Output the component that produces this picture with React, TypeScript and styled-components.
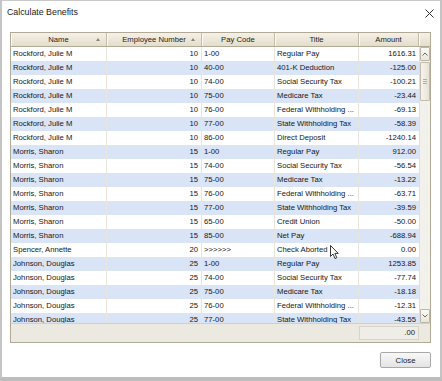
import React from "react";
import styled, { createGlobalStyle } from "styled-components";

const Global = createGlobalStyle`
  html, body { margin: 0; padding: 0; background: #fff; }
  * { box-sizing: border-box; }
`;

const Window = styled.div`
  position: relative;
  width: 442px;
  height: 381px;
  background: #fff;
  border-left: 2px solid #c4c4c4;
  border-right: 2px solid #c4c4c4;
  border-top: 1px solid #c9c9c9;
  border-bottom: 4px solid #bdbdbd;
  display: flex;
  flex-direction: column;
  font-family: "Liberation Sans", Arial, sans-serif;
`;

const TitleBar = styled.div`
  height: 31px;
  display: flex;
  align-items: flex-start;
  justify-content: space-between;
  padding: 6px 6px 0 5px;
`;

const TitleText = styled.div`
  font-size: 8.8px;
  color: #1a1a1a;
  line-height: 11px;
`;

const CloseX = styled.svg`
  width: 9px;
  height: 9px;
  margin-top: 2px;
`;

const Grid = styled.div`
  margin-left: 8px;
  width: 421px;
  border: 1px solid #b0a995;
  display: flex;
  flex-direction: column;
  background: #fff;
`;

const cols = "96px 95px 73px 84px 60px 11px";

const HeaderRow = styled.div`
  display: grid;
  grid-template-columns: ${cols};
  height: 14px;
  background: linear-gradient(#f5f1e6, #e4ddcb);
  border-bottom: 1px solid #b0a995;
`;

const HeaderCell = styled.div<{ $last?: boolean }>`
  position: relative;
  font-size: 7.7px;
  color: #222;
  text-align: center;
  line-height: 13px;
  border-right: ${(p) => (p.$last ? "none" : "1px solid #c4bba6")};
  box-shadow: inset 1px 0 0 #fbfaf6;
`;

const SortArrow = styled.span`
  position: absolute;
  right: 6px;
  top: 5px;
  width: 0;
  height: 0;
  border-left: 2.5px solid transparent;
  border-right: 2.5px solid transparent;
  border-bottom: 3px solid #8a8578;
`;

const Body = styled.div`
  display: flex;
  height: 276px;
`;

const Rows = styled.div`
  width: 408px;
  height: 276px;
  overflow: hidden;
`;

const Row = styled.div<{ $alt: boolean }>`
  display: grid;
  grid-template-columns: 96px 95px 73px 84px 60px;
  height: 14px;
  background: ${(p) => (p.$alt ? "#d9e4f6" : "#ffffff")};
`;

const Cell = styled.div<{ $right?: boolean; $last?: boolean }>`
  font-size: 7.7px;
  color: #161616;
  line-height: 14px;
  white-space: nowrap;
  overflow: hidden;
  padding: ${(p) => (p.$right ? "0 3px 0 2px" : "0 2px 0 2px")};
  text-align: ${(p) => (p.$right ? "right" : "left")};
  border-right: ${(p) => (p.$last ? "none" : "1px solid #e9e5dc")};
`;

const ScrollBar = styled.div`
  width: 11px;
  height: 276px;
  background: #f3f1ec;
  border-left: 1px solid #e2ded4;
  display: flex;
  flex-direction: column;
`;

const ScrollButton = styled.div`
  height: 14px;
  border: 1px solid #bdb7a8;
  border-radius: 1px;
  background: linear-gradient(#faf9f5, #e9e5da);
  display: flex;
  align-items: center;
  justify-content: center;
`;

const Thumb = styled.div`
  height: 39px;
  margin-top: 1px;
  border: 1px solid #c2bcae;
  border-radius: 1px;
  background: linear-gradient(90deg, #f6f4ee, #e6e1d4);
  display: flex;
  flex-direction: column;
  align-items: center;
  justify-content: center;
  gap: 1px;
`;

const Grip = styled.span`
  width: 4px;
  height: 1px;
  background: #b4ae9f;
`;

const Track = styled.div`
  flex: 1;
`;

const Footer = styled.div`
  height: 19px;
  background: #ece9e0;
  border-top: 1px solid #d4cfc2;
  display: grid;
  grid-template-columns: 348px 60px 11px;
  align-items: center;
`;

const FooterAmount = styled.div`
  height: 14px;
  border: 1px solid #d8d4c9;
  background: #efede7;
  font-size: 7.7px;
  color: #161616;
  line-height: 12px;
  text-align: right;
  padding-right: 3px;
`;

const ButtonBar = styled.div`
  display: flex;
  justify-content: flex-end;
  padding: 9px 9px 0 0;
`;

const CloseButton = styled.button`
  width: 51px;
  height: 16px;
  border: 1px solid #a9a9a9;
  border-radius: 2px;
  background: linear-gradient(#f8f8f8, #e4e4e4);
  font-family: "Liberation Sans", Arial, sans-serif;
  font-size: 7.8px;
  color: #1a1a1a;
  padding: 0;
`;

const Cursor = styled.svg`
  position: absolute;
  left: 328px;
  top: 244px;
  width: 10px;
  height: 15px;
`;

type R = [string, string, string, string, string];

const data: R[] = [
  ["Rockford, Julie M", "10", "1-00", "Regular Pay", "1616.31"],
  ["Rockford, Julie M", "10", "40-00", "401-K Deduction", "-125.00"],
  ["Rockford, Julie M", "10", "74-00", "Social Security Tax", "-100.21"],
  ["Rockford, Julie M", "10", "75-00", "Medicare Tax", "-23.44"],
  ["Rockford, Julie M", "10", "76-00", "Federal Withholding ...", "-69.13"],
  ["Rockford, Julie M", "10", "77-00", "State Withholding Tax", "-58.39"],
  ["Rockford, Julie M", "10", "86-00", "Direct Deposit", "-1240.14"],
  ["Morris, Sharon", "15", "1-00", "Regular Pay", "912.00"],
  ["Morris, Sharon", "15", "74-00", "Social Security Tax", "-56.54"],
  ["Morris, Sharon", "15", "75-00", "Medicare Tax", "-13.22"],
  ["Morris, Sharon", "15", "76-00", "Federal Withholding ...", "-63.71"],
  ["Morris, Sharon", "15", "77-00", "State Withholding Tax", "-39.59"],
  ["Morris, Sharon", "15", "65-00", "Credit Union", "-50.00"],
  ["Morris, Sharon", "15", "85-00", "Net Pay", "-688.94"],
  ["Spencer, Annette", "20", ">>>>>>", "Check Aborted", "0.00"],
  ["Johnson, Douglas", "25", "1-00", "Regular Pay", "1253.85"],
  ["Johnson, Douglas", "25", "74-00", "Social Security Tax", "-77.74"],
  ["Johnson, Douglas", "25", "75-00", "Medicare Tax", "-18.18"],
  ["Johnson, Douglas", "25", "76-00", "Federal Withholding ...", "-12.31"],
  ["Johnson, Douglas", "25", "77-00", "State Withholding Tax", "-43.55"],
];

const Chevron = ({ up }: { up: boolean }) => (
  <svg width="6" height="4" viewBox="0 0 6 4">
    <path
      d={up ? "M0.5 3.5 L3 1 L5.5 3.5" : "M0.5 0.5 L3 3 L5.5 0.5"}
      fill="none"
      stroke="#6d6a62"
      strokeWidth="1"
    />
  </svg>
);

export default function App() {
  return (
    <>
      <Global />
      <Window>
        <TitleBar>
          <TitleText>Calculate Benefits</TitleText>
          <CloseX viewBox="0 0 9 9">
            <path d="M0.5 0.5 L8.5 8.5 M8.5 0.5 L0.5 8.5" stroke="#333" strokeWidth="1" />
          </CloseX>
        </TitleBar>
        <Grid>
          <HeaderRow>
            <HeaderCell>
              Name<SortArrow />
            </HeaderCell>
            <HeaderCell>
              Employee Number<SortArrow />
            </HeaderCell>
            <HeaderCell>Pay Code</HeaderCell>
            <HeaderCell>Title</HeaderCell>
            <HeaderCell>Amount</HeaderCell>
            <HeaderCell $last />
          </HeaderRow>
          <Body>
            <Rows>
              {data.map((r, i) => (
                <Row key={i} $alt={i % 2 === 1}>
                  <Cell>{r[0]}</Cell>
                  <Cell $right>{r[1]}</Cell>
                  <Cell>{r[2]}</Cell>
                  <Cell>{r[3]}</Cell>
                  <Cell $right $last>
                    {r[4]}
                  </Cell>
                </Row>
              ))}
            </Rows>
            <ScrollBar>
              <ScrollButton>
                <Chevron up />
              </ScrollButton>
              <Thumb>
                <Grip />
                <Grip />
                <Grip />
              </Thumb>
              <Track />
              <ScrollButton>
                <Chevron up={false} />
              </ScrollButton>
            </ScrollBar>
          </Body>
          <Footer>
            <span />
            <FooterAmount>.00</FooterAmount>
            <span />
          </Footer>
        </Grid>
        <ButtonBar>
          <CloseButton>Close</CloseButton>
        </ButtonBar>
        <Cursor viewBox="0 0 10 15">
          <path
            d="M0.5 0.5 L0.5 11.5 L3 9 L5 13.5 L6.8 12.7 L4.9 8.4 L8.3 8.4 Z"
            fill="#fff"
            stroke="#222"
            strokeWidth="0.9"
            strokeLinejoin="round"
          />
        </Cursor>
      </Window>
    </>
  );
}
